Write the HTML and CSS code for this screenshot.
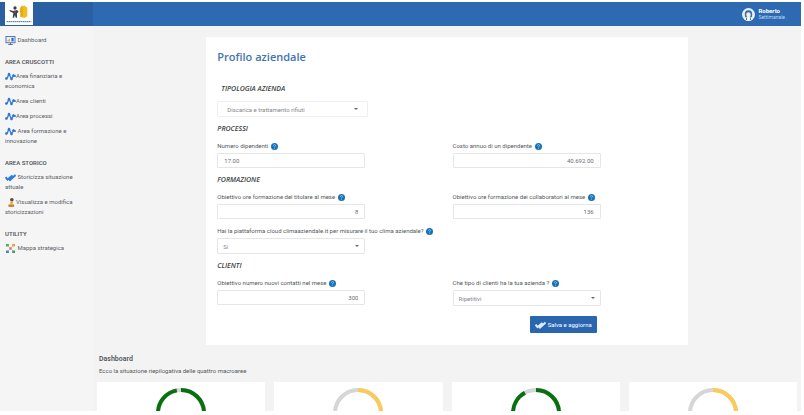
FILE: index.html
```html
<!DOCTYPE html>
<html lang="it">

<head>
    <meta charset="utf-8">
    <title>Profilo aziendale</title>
    <meta name="viewport" content="width=device-width, initial-scale=1.0">

    <link rel="stylesheet" href="styles.css">
</head>

<body>
    <!-- Shared icons -->
    <svg class="sprite" aria-hidden="true">
        <symbol id="icon-wave" viewBox="0 0 22 16">
            <path d="M2 12 L4 12 L8 3 L13 13 L17 6 L20 7" fill="none" stroke="#3b84dc" stroke-width="3"/>
            <g fill="#2f74d0">
                <circle cx="2.5" cy="12" r="2.5"/>
                <circle cx="8" cy="3.5" r="2.5"/>
                <circle cx="13" cy="13" r="2.5"/>
                <circle cx="17" cy="6" r="2.5"/>
                <circle cx="20" cy="7" r="1.8"/>
            </g>
        </symbol>
        <symbol id="icon-checks" viewBox="0 0 22 16">
            <path d="M1 7 L5 12 L15 4 M7 9 L10 13 L21 3" fill="none" stroke="currentColor" stroke-width="4"/>
        </symbol>
        <symbol id="icon-help" viewBox="0 0 14 14">
            <circle cx="7" cy="7" r="7" fill="#1672b8"/>
            <path d="M4.8 5.5 Q4.8 3.3 7 3.3 Q9.2 3.3 9.2 5.2 Q9.2 6.5 7 7.5 V8.7 M7 9.8 V11.3" fill="none" stroke="#a9cfea" stroke-width="1.5"/>
        </symbol>
    </svg>

    <div class="app">
        <header class="topbar">
            <div class="brand">
                <svg class="logo" viewBox="0 0 84 69" role="img" aria-label="Logo">
                    <rect width="84" height="69" fill="#ffffff"/>
                    <circle cx="30" cy="18" r="5" fill="#39434d"/>
                    <path d="M14 24 L25 27 L36 24 L41 29 L36 34 V47 H32 L30 39 L27 47 H23 L25 33 L14 28 Z" fill="#39434d"/>
                    <path d="M29 25 L32 34" stroke="#c84c3c" stroke-width="2"/>
                    <path d="M44 18 L50 11 H60 L67 18 V43 L58 48 L45 44 Z" fill="#f2bc23"/>
                    <path d="M51 15 V43 M45 27 L51 29" fill="none" stroke="#c48e16" stroke-width="2"/>
                    <path d="M5 59 H79" stroke="#3f6da5" stroke-width="3" stroke-dasharray="5 1"/>
                </svg>
            </div>
            <div class="user">
                <svg class="avatar" viewBox="0 0 40 40" aria-hidden="true">
                    <circle cx="20" cy="20" r="20" fill="#e4f0fb"/>
                    <path d="M9 25 Q6 7 20 7 Q34 7 31 25 L27 30 H13 Z" fill="#376ca8"/>
                    <ellipse cx="20" cy="21" rx="7" ry="8" fill="#f5ece4"/>
                    <path d="M7 35 Q10 28 20 28 Q30 28 33 35 Q20 44 7 35 Z" fill="#ffffff"/>
                    <path d="M14 30 V37 M26 30 V37" stroke="#376ca8" stroke-width="3"/>
                </svg>
                <div>
                    <div class="user-name">Roberto</div>
                    <div class="user-plan">Settimanale</div>
                </div>
            </div>
        </header>

        <div class="layout">
            <nav class="sidebar">
                <a href="#dashboard">
                    <svg class="nav-icon" viewBox="0 0 22 20" aria-hidden="true">
                        <rect x="1" y="1" width="20" height="14" fill="#e9f2fc" stroke="#3a6fc0" stroke-width="2"/>
                        <path d="M4 12 V9 H7 V6 H10 V12" fill="#f3a95d"/>
                        <rect x="13" y="4" width="5" height="8" fill="#356cbb"/>
                        <path d="M11 15 V18 M6 19 H16" stroke="#4b56a8" stroke-width="2"/>
                    </svg>
                    Dashboard
                </a>

                <h2>AREA CRUSCOTTI</h2>
                <a href="#finanziaria"><svg class="nav-icon"><use href="#icon-wave"/></svg>Area finanziaria e economica</a>
                <a href="#clienti"><svg class="nav-icon"><use href="#icon-wave"/></svg>Area clienti</a>
                <a href="#processi"><svg class="nav-icon"><use href="#icon-wave"/></svg>Area processi</a>
                <a href="#formazione"><svg class="nav-icon"><use href="#icon-wave"/></svg> Area formazione e innovazione</a>

                <h2>AREA STORICO</h2>
                <a href="#storicizza"><svg class="nav-icon"><use href="#icon-checks"/></svg> Storicizza situazione attuale</a>
                <a href="#storicizzazioni">
                    <svg class="nav-icon" viewBox="0 0 22 20" aria-hidden="true">
                        <circle cx="14" cy="4" r="4" fill="#55493d"/>
                        <path d="M11 8 H17 L15 14 H19 V19 H6 V15 L11 12 Z" fill="#eda23a"/>
                        <path d="M7 18 H19" stroke="#805234" stroke-width="2"/>
                    </svg>Visualizza e modifica storicizzazioni
                </a>

                <h2>UTILITY</h2>
                <a href="#mappa">
                    <svg class="nav-icon" viewBox="0 0 22 22" aria-hidden="true">
                        <path d="M4 4 L18 18 M18 4 L4 18" stroke="#8f9aa3" stroke-width="1"/>
                        <rect x="0" y="0" width="7" height="6" fill="#62a944"/>
                        <rect x="15" y="0" width="7" height="6" fill="#e9a23b"/>
                        <rect x="8" y="8" width="6" height="6" fill="#dc7771"/>
                        <rect x="0" y="16" width="7" height="6" fill="#4384cf"/>
                        <rect x="15" y="16" width="7" height="6" fill="#4b9b58"/>
                    </svg>
                    Mappa strategica
                </a>
            </nav>

            <main class="content">
                <form class="profile-card">
                    <h1>Profilo aziendale</h1>

                    <h3 class="type-title" id="type-title">TIPOLOGIA AZIENDA</h3>
                    <div class="select-box type-select">
                        <select name="tipologia" aria-labelledby="type-title">
                            <option>Discarica e trattamento rifiuti</option>
                        </select>
                    </div>

                    <h3>PROCESSI</h3>
                    <div class="form-row">
                        <div class="field">
                            <label for="dipendenti">Numero dipendenti <svg class="help"><use href="#icon-help"/></svg></label>
                            <input type="text" id="dipendenti" name="dipendenti" value="17.00">
                        </div>
                        <div class="field">
                            <label for="costo">Costo annuo di un dipendente <svg class="help"><use href="#icon-help"/></svg></label>
                            <input type="text" class="number" id="costo" name="costo" value="40.692.00">
                        </div>
                    </div>

                    <h3>FORMAZIONE</h3>
                    <div class="form-row">
                        <div class="field">
                            <label for="ore-titolare">Obiettivo ore formazione del titolare al mese <svg class="help"><use href="#icon-help"/></svg></label>
                            <input type="text" class="number" id="ore-titolare" name="ore_titolare" value="8">
                        </div>
                        <div class="field">
                            <label for="ore-collaboratori">Obiettivo ore formazione dei collaboratori al mese <svg class="help"><use href="#icon-help"/></svg></label>
                            <input type="text" class="number" id="ore-collaboratori" name="ore_collaboratori" value="136">
                        </div>
                        <div class="field">
                            <label for="clima">Hai la piattaforma cloud climaaziendale.it per misurare il tuo clima aziendale? <svg class="help"><use href="#icon-help"/></svg></label>
                            <div class="select-box">
                                <select id="clima" name="clima">
                                    <option>Si</option>
                                    <option>No</option>
                                </select>
                            </div>
                        </div>
                    </div>

                    <h3>CLIENTI</h3>
                    <div class="form-row">
                        <div class="field">
                            <label for="contatti">Obiettivo numero nuovi contatti nel mese <svg class="help"><use href="#icon-help"/></svg></label>
                            <input type="text" class="number" id="contatti" name="contatti" value="300">
                        </div>
                        <div class="field">
                            <label for="tipo-clienti">Che tipo di clienti ha la tua azienda ? <svg class="help"><use href="#icon-help"/></svg></label>
                            <div class="select-box">
                                <select id="tipo-clienti" name="tipo_clienti">
                                    <option>Ripetitivi</option>
                                </select>
                            </div>
                        </div>
                    </div>

                    <div class="actions">
                        <button type="submit"><svg class="btn-icon"><use href="#icon-checks"/></svg> Salva e aggiorna</button>
                    </div>
                </form>

                <section class="dashboard" id="dashboard">
                    <h2>Dashboard</h2>
                    <p>Ecco la situazione riepilogativa delle quattro macroaree</p>

                    <!-- One ring per area, pathLength makes the dashes percentages -->
                    <div class="gauges">
                        <div class="gauge">
                            <svg viewBox="0 0 50 50">
                                <circle class="track" cx="25" cy="25" r="23"/>
                                <circle class="bar green" cx="25" cy="25" r="23" pathLength="100" stroke-dasharray="97 3"/>
                            </svg>
                        </div>
                        <div class="gauge">
                            <svg viewBox="0 0 50 50">
                                <circle class="track" cx="25" cy="25" r="23"/>
                                <circle class="bar yellow" cx="25" cy="25" r="23" pathLength="100" stroke-dasharray="50 50"/>
                            </svg>
                        </div>
                        <div class="gauge">
                            <svg viewBox="0 0 50 50">
                                <circle class="track" cx="25" cy="25" r="23"/>
                                <circle class="bar green" cx="25" cy="25" r="23" pathLength="100" stroke-dasharray="92 8"/>
                            </svg>
                        </div>
                        <div class="gauge">
                            <svg viewBox="0 0 50 50">
                                <circle class="track" cx="25" cy="25" r="23"/>
                                <circle class="bar yellow" cx="25" cy="25" r="23" pathLength="100" stroke-dasharray="50 50"/>
                            </svg>
                        </div>
                    </div>
                </section>
            </main>
        </div>
    </div>
</body>
</html>
```

FILE: styles.css
```css
* {
    box-sizing: border-box;
}

body {
    margin: 0;
    padding: 2px 3px 4px 0;
    height: 100vh;
    overflow: hidden;
    background-color: #ffffff;
    color: #55585c;
    font-family: Roboto, "Open Sans", sans-serif;
    font-size: 6px;
    line-height: 10px;
}

h1, h2, h3, p {
    margin: 0;
}

.sprite {
    display: none;
}

.app {
    display: flex;
    flex-direction: column;
    height: 100%;
    overflow: hidden;
    background-color: #f3f3f3;
}

/* Top bar */
.topbar {
    display: flex;
    flex: none;
    justify-content: space-between;
    height: 24px;
    background-color: #2e6ab2;
}

.brand {
    width: 93px;
    padding-left: 5px;
    background-color: #2a5fa2;
}

.logo {
    display: block;
    width: 28px;
    height: 23px;
}

.user {
    display: flex;
    align-items: center;
    gap: 3px;
    padding-right: 16px;
    color: #ffffff;
    font-size: 5px;
    line-height: 7px;
}

.avatar {
    width: 13px;
    height: 13px;
}

.user-name {
    font-size: 6px;
    font-weight: bold;
}

.user-plan {
    color: #bcd5f2;
}

.layout {
    display: flex;
    flex: 1;
    min-height: 0;
}

/* Side menu */
.sidebar {
    flex: none;
    width: 93px;
    padding: 9px 18px 0 5px;
    background-color: #f5f5f5;
}

.sidebar a {
    display: block;
    margin-top: 5px;
    color: #5d6064;
    text-decoration: none;
}

.sidebar a:first-child {
    margin-top: 0;
}

.sidebar h2 {
    margin-top: 12px;
    font-size: 6px;
    font-weight: 600;
}

.sidebar h2 + a {
    margin-top: 4px;
}

.nav-icon {
    width: 11px;
    height: 9px;
    color: #2f7dd6;
    vertical-align: middle;
}

/* Company profile */
.content {
    flex: 1;
    min-width: 0;
}

.profile-card {
    width: 68%;
    margin: 11px auto 0;
    padding: 12px 0 12px 11px;
    background-color: #ffffff;
}

h1 {
    color: #4472b0;
    font-family: "Open Sans", sans-serif;
    font-size: 11px;
    font-weight: 600;
    line-height: 16px;
}

h3 {
    margin: 7px 0;
    color: #3c3f43;
    font-family: "Open Sans", sans-serif;
    font-size: 7px;
    font-style: italic;
    font-weight: 600;
}

.type-title {
    margin: 19px 4px 7px;
}

.form-row {
    display: grid;
    grid-template-columns: 1fr 1fr;
    row-gap: 7px;
}

.field label {
    display: block;
    margin-bottom: 2px;
    white-space: nowrap;
}

.field input,
.select-box {
    width: 63%;
}

.help {
    width: 7px;
    height: 7px;
    margin-left: 1px;
    vertical-align: middle;
}

input,
select {
    display: block;
    width: 100%;
    height: 15px;
    margin: 0;
    padding: 0 6px;
    border: 1px solid #e6e6e6;
    border-radius: 1px;
    background-color: #ffffff;
    color: #6b6e72;
    font-family: inherit;
    font-size: 6px;
}

.number {
    text-align: right;
}

.select-box {
    display: grid;
    align-items: center;
}

.select-box select {
    grid-area: 1 / 1;
    height: 16px;
    padding: 0 5px;
    appearance: none;
    color: #85888b;
}

.select-box::after {
    content: "";
    grid-area: 1 / 1;
    justify-self: end;
    margin-right: 6px;
    border: 2px solid transparent;
    border-top-color: #66696c;
    border-bottom: 0;
    pointer-events: none;
}

.type-select {
    width: 32%;
}

.type-select select {
    padding: 0 9px;
    border-color: #f0f0f0;
}

.type-select::after {
    margin-right: 10px;
}

.actions {
    display: flex;
    justify-content: flex-end;
    margin-top: 10px;
    padding-right: 91px;
}

button {
    height: 17px;
    padding: 0 5px;
    border: none;
    border-radius: 1px;
    background-color: #2a66b0;
    color: #ffffff;
    font-family: inherit;
    font-size: 6px;
    line-height: 10px;
    cursor: pointer;
}

.btn-icon {
    width: 11px;
    height: 8px;
    color: #dcebfb;
    vertical-align: middle;
}

/* Dashboard summary */
.dashboard {
    padding: 9px 4px 0;
}

.dashboard h2,
.dashboard p {
    padding-left: 2px;
}

.dashboard h2 {
    margin-bottom: 2px;
    font-size: 7px;
    font-weight: 600;
}

.gauges {
    display: grid;
    grid-template-columns: repeat(4, 1fr);
    gap: 9px;
    margin-top: 6px;
}

.gauge {
    padding: 6px 0;
    background-color: #ffffff;
}

.gauge svg {
    display: block;
    width: 50px;
    height: 50px;
    margin: 0 auto;
    transform: rotate(-90deg);
}

.gauge circle {
    fill: none;
    stroke-width: 4;
}

.track {
    stroke: #d6d6d6;
}

.green {
    stroke: #09700f;
}

.yellow {
    stroke: #f9cb58;
}
```
